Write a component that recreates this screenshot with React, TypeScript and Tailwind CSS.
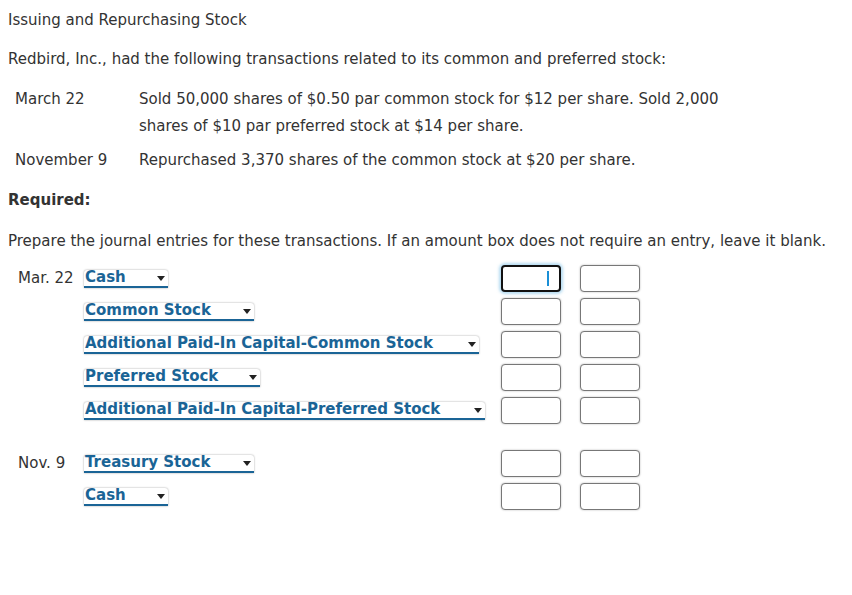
import type { FC } from 'react';

interface ISelectProps {
  label: string;
  width: string;
}

const AccountSelect: FC<ISelectProps> = ({ label, width }) => (
  <div
    className={`relative flex h-[18px] items-center rounded-t-[3px] border-b-2 border-[#1a6496] bg-white shadow-[0_0_2px_rgba(0,0,0,0.4)] ${width}`}
  >
    <span className="pl-[1px] text-[15px] font-bold leading-none text-[#1a6496]">
      {label}
    </span>
    <span className="absolute right-[3px] top-[6px] h-0 w-0 border-x-[4px] border-t-[5px] border-x-transparent border-t-[#222]" />
  </div>
);

const AmountBox: FC<{ focused?: boolean }> = ({ focused }) =>
  focused ? (
    <div className="relative h-[27px] w-[60px] rounded-[4px] border-2 border-[#111] bg-white shadow-[0_0_3px_2px_rgba(120,190,230,0.55)]">
      <span className="absolute right-[10px] top-[4px] h-[15px] w-[2px] bg-[#1a8fd6]" />
    </div>
  ) : (
    <div className="h-[27px] w-[60px] rounded-[4px] border-[1.5px] border-[#777] bg-white shadow-[0_0_2px_rgba(0,0,0,0.3)]" />
  );

interface IRowProps {
  date?: string;
  label: string;
  width: string;
  focused?: boolean;
}

const EntryRow: FC<IRowProps> = ({ date, label, width, focused }) => (
  <div className="flex h-[33px] items-center">
    <div className="w-[84px] pl-[18px] text-[15px] text-[#333]">{date}</div>
    <div className="w-[417px]">
      <AccountSelect label={label} width={width} />
    </div>
    <div className="flex gap-[19px]">
      <AmountBox focused={focused} />
      <AmountBox />
    </div>
  </div>
);

const App: FC = () => (
  <div
    className="min-h-[595px] w-[852px] bg-white px-[8px] pt-[9px] text-[15px] text-[#333]"
    style={{ fontFamily: '"DejaVu Sans", Verdana, sans-serif' }}
  >
    <p className="leading-[22px]">Issuing and Repurchasing Stock</p>
    <p className="mt-[17px] leading-[22px]">
      Redbird, Inc., had the following transactions related to its common and preferred stock:
    </p>
    <div className="mt-[16px] flex pl-[7px] leading-[27px]">
      <div className="w-[124px]">March 22</div>
      <div>
        Sold 50,000 shares of $0.50 par common stock for $12 per share. Sold 2,000
        <br />
        shares of $10 par preferred stock at $14 per share.
      </div>
    </div>
    <div className="mt-[7px] flex pl-[7px] leading-[27px]">
      <div className="w-[124px]">November 9</div>
      <div>Repurchased 3,370 shares of the common stock at $20 per share.</div>
    </div>
    <p className="mt-[15px] font-bold leading-[22px]">Required:</p>
    <p className="mt-[19px] leading-[22px]">
      Prepare the journal entries for these transactions. If an amount box does not require an entry, leave it blank.
    </p>
    <div className="mt-[10px] -ml-[8px]">
      <EntryRow date="Mar. 22" label="Cash" width="w-[84px]" focused />
      <EntryRow label="Common Stock" width="w-[170px]" />
      <EntryRow label="Additional Paid-In Capital-Common Stock" width="w-[395px]" />
      <EntryRow label="Preferred Stock" width="w-[176px]" />
      <EntryRow label="Additional Paid-In Capital-Preferred Stock" width="w-[401px]" />
      <div className="h-[20px]" />
      <EntryRow date="Nov. 9" label="Treasury Stock" width="w-[170px]" />
      <EntryRow label="Cash" width="w-[84px]" />
    </div>
  </div>
);

export default App;
